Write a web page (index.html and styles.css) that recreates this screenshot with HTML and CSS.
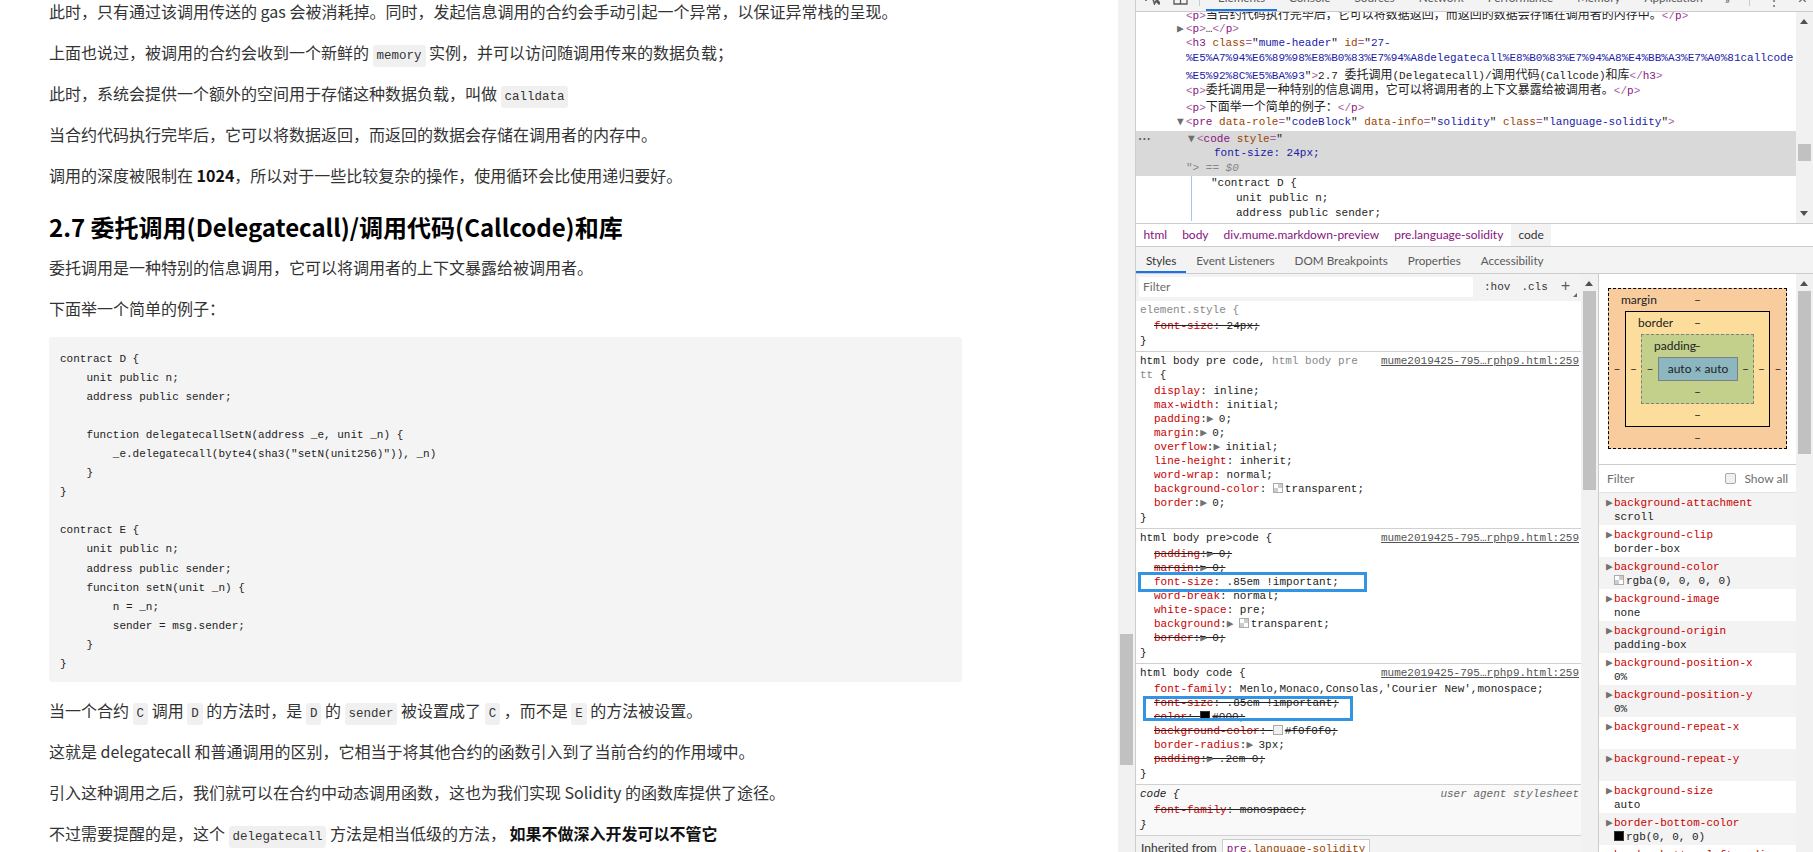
FILE: index.html
```html
<!DOCTYPE html>
<html lang="zh-CN">
<head>
    <meta charset="UTF-8">
    <title>2.7 委托调用(Delegatecall)/调用代码(Callcode)和库</title>
    <link rel="stylesheet" href="styles.css">
</head>
<body>
    <div class="preview">
        <div class="article">
            <p>此时，只有通过该调用传送的 gas 会被消耗掉。同时，发起信息调用的合约会手动引起一个异常，以保证异常栈的呈现。</p>
            <p>上面也说过，被调用的合约会收到一个新鲜的 <code>memory</code> 实例，并可以访问随调用传来的数据负载；</p>
            <p>此时，系统会提供一个额外的空间用于存储这种数据负载，叫做 <code>calldata</code></p>
            <p>当合约代码执行完毕后，它可以将数据返回，而返回的数据会存储在调用者的内存中。</p>
            <p>调用的深度被限制在 <strong>1024</strong>，所以对于一些比较复杂的操作，使用循环会比使用递归要好。</p>
            <h3>2.7 委托调用(Delegatecall)/调用代码(Callcode)和库</h3>
            <p>委托调用是一种特别的信息调用，它可以将调用者的上下文暴露给被调用者。</p>
            <p>下面举一个简单的例子：</p>
            <pre>contract D {
    unit public n;
    address public sender;

    function delegatecallSetN(address _e, unit _n) {
        _e.delegatecall(byte4(sha3("setN(unit256)")), _n)
    }
}

contract E {
    unit public n;
    address public sender;
    funciton setN(unit _n) {
        n = _n;
        sender = msg.sender;
    }
}</pre>
            <p>当一个合约 <code>C</code> 调用 <code>D</code> 的方法时，是 <code>D</code> 的 <code>sender</code> 被设置成了 <code>C</code> ，而不是 <code>E</code> 的方法被设置。</p>
            <p>这就是 delegatecall 和普通调用的区别，它相当于将其他合约的函数引入到了当前合约的作用域中。</p>
            <p>引入这种调用之后，我们就可以在合约中动态调用函数，这也为我们实现 Solidity 的函数库提供了途径。</p>
            <p>不过需要提醒的是，这个 <code>delegatecall</code> 方法是相当低级的方法， <strong>如果不做深入开发可以不管它</strong></p>
        </div>
    </div>
    <div class="vbar page-bar"><div class="thumb"></div></div>

    <div class="devtools">
        <div class="toolbar">
            <svg class="tool-icon" width="15" height="15" viewBox="0 0 15 15"><path d="M1 11V1h10v3M7 6l2.500 8 1.500-3 3 3 1-1-3-3 3-1.500z" fill="none" stroke="#5a5a5a" stroke-width="1.500"/></svg>
            <svg class="tool-icon" width="15" height="15" viewBox="0 0 15 15"><path d="M1 1h13v13H1zM7.500 5v9" fill="none" stroke="#5a5a5a" stroke-width="1.300"/></svg>
            <span class="tool-sep first"></span>
            <span class="tool-tab active">Elements</span>
            <span class="tool-tab">Console</span>
            <span class="tool-tab">Sources</span>
            <span class="tool-tab">Network</span>
            <span class="tool-tab">Performance</span>
            <span class="tool-tab">Memory</span>
            <span class="tool-tab">Application</span>
            <span class="tool-more">»</span>
            <span class="tool-sep"></span>
            <span class="tool-dots">⋮</span>
            <span class="tool-close">×</span>
        </div>

        <div class="dom-panel">
            <div class="dom-list">
                <div class="row in1"><b>&lt;</b><i>p</i><b>&gt;</b><span class="zh">当合约代码执行完毕后，它可以将数据返回，而返回的数据会存储在调用者的内存中。</span><b>&lt;/</b><i>p</i><b>&gt;</b></div>
                <div class="row in1"><span class="arrow">▶</span><b>&lt;</b><i>p</i><b>&gt;</b>…<b>&lt;/</b><i>p</i><b>&gt;</b></div>
                <div class="row in1"><b>&lt;</b><i>h3</i> <u>class</u><b>=</b>"<em>mume-header</em>" <u>id</u><b>=</b>"<em>27-</em></div>
                <div class="row in1"><em>%E5%A7%94%E6%89%98%E8%B0%83%E7%94%A8delegatecall%E8%B0%83%E7%94%A8%E4%BB%A3%E7%A0%81callcode</em></div>
                <div class="row in1"><em>%E5%92%8C%E5%BA%93</em>"<b>&gt;</b>2.7 <span class="zh">委托调用</span>(Delegatecall)/<span class="zh">调用代码</span>(Callcode)<span class="zh">和库</span><b>&lt;/</b><i>h3</i><b>&gt;</b></div>
                <div class="row tall in1"><b>&lt;</b><i>p</i><b>&gt;</b><span class="zh">委托调用是一种特别的信息调用，它可以将调用者的上下文暴露给被调用者。</span><b>&lt;/</b><i>p</i><b>&gt;</b></div>
                <div class="row tall in1"><b>&lt;</b><i>p</i><b>&gt;</b><span class="zh">下面举一个简单的例子：</span><b>&lt;/</b><i>p</i><b>&gt;</b></div>
                <div class="row tall in1"><span class="arrow">▼</span><b>&lt;</b><i>pre</i> <u>data-role</u><b>=</b>"<em>codeBlock</em>" <u>data-info</u><b>=</b>"<em>solidity</em>" <u>class</u><b>=</b>"<em>language-solidity</em>"<b>&gt;</b></div>
                <div class="selected">
                    <span class="sel-dots">•••</span>
                    <div class="row in2"><span class="arrow">▼</span><b>&lt;</b><i>code</i> <u>style</u><b>=</b>"</div>
                    <div class="row in3"><em>font-size: 24px;</em></div>
                    <div class="row in1"><span class="dim">"&gt; == <span class="var">$0</span></span></div>
                </div>
                <div class="code-text">
                    <div class="row in4">"contract D {</div>
                    <div class="row in5">unit public n;</div>
                    <div class="row in5">address public sender;</div>
                </div>
            </div>
            <div class="vbar dom-bar">
                <span class="bar-up"></span>
                <div class="thumb"></div>
                <span class="bar-down"></span>
            </div>
        </div>

        <div class="crumbs">
            <span>html</span><span>body</span><span>div.mume.markdown-preview</span><span>pre.language-solidity</span><span class="crumb-on">code</span>
        </div>

        <div class="side-tabs">
            <span class="side-tab active">Styles</span>
            <span class="side-tab">Event Listeners</span>
            <span class="side-tab">DOM Breakpoints</span>
            <span class="side-tab">Properties</span>
            <span class="side-tab">Accessibility</span>
        </div>

        <div class="side-body">
            <div class="styles">
                <div class="filter-bar">
                    <span class="filter-input">Filter</span>
                    <span class="filter-btn">:hov</span>
                    <span class="filter-btn">.cls</span>
                    <span class="filter-plus">+</span>
                    <span class="filter-corner"></span>
                </div>

                <div class="rule">
                    <div class="sel dim">element.style {</div>
                    <div class="props">
                        <div class="off"><span class="n">font-size</span>: 24px;</div>
                    </div>
                    <div>}</div>
                </div>

                <div class="rule">
                    <span class="src">mume2019425-795…rphp9.html:259</span>
                    <div class="sel">html body pre code, <span class="dim">html body pre<br>tt</span> {</div>
                    <div class="props">
                        <div><span class="n">display</span>: inline;</div>
                        <div><span class="n">max-width</span>: initial;</div>
                        <div><span class="n">padding</span>:<span class="tri">▶</span>&nbsp;0;</div>
                        <div><span class="n">margin</span>:<span class="tri">▶</span>&nbsp;0;</div>
                        <div><span class="n">overflow</span>:<span class="tri">▶</span>&nbsp;initial;</div>
                        <div><span class="n">line-height</span>: inherit;</div>
                        <div><span class="n">word-wrap</span>: normal;</div>
                        <div><span class="n">background-color</span>: <span class="swatch"></span>transparent;</div>
                        <div><span class="n">border</span>:<span class="tri">▶</span>&nbsp;0;</div>
                    </div>
                    <div>}</div>
                </div>

                <div class="rule">
                    <span class="src">mume2019425-795…rphp9.html:259</span>
                    <div class="sel">html body pre&gt;code {</div>
                    <div class="props">
                        <div class="off"><span class="n">padding</span>:<span class="tri">▶</span>&nbsp;0;</div>
                        <div class="off"><span class="n">margin</span>:<span class="tri">▶</span>&nbsp;0;</div>
                        <div><span class="n">font-size</span>: .85em !important;</div>
                        <div><span class="n">word-break</span>: normal;</div>
                        <div><span class="n">white-space</span>: pre;</div>
                        <div><span class="n">background</span>:<span class="tri">▶</span>&nbsp;<span class="swatch"></span>transparent;</div>
                        <div class="off"><span class="n">border</span>:<span class="tri">▶</span>&nbsp;0;</div>
                    </div>
                    <div>}</div>
                    <div class="mark mark-size"></div>
                </div>

                <div class="rule">
                    <span class="src">mume2019425-795…rphp9.html:259</span>
                    <div class="sel">html body code {</div>
                    <div class="props">
                        <div><span class="n">font-family</span>: Menlo,Monaco,Consolas,'Courier New',monospace;</div>
                        <div class="off"><span class="n">font-size</span>: .85em !important;</div>
                        <div class="off"><span class="n">color</span>: <span class="swatch black"></span>#000;</div>
                        <div class="off"><span class="n">background-color</span>: <span class="swatch light"></span>#f0f0f0;</div>
                        <div><span class="n">border-radius</span>:<span class="tri">▶</span>&nbsp;3px;</div>
                        <div class="off"><span class="n">padding</span>:<span class="tri">▶</span>&nbsp;.2em 0;</div>
                    </div>
                    <div>}</div>
                    <div class="mark mark-font"></div>
                </div>

                <div class="rule agent">
                    <span class="src plain">user agent stylesheet</span>
                    <div class="sel">code {</div>
                    <div class="props">
                        <div class="off"><span class="n">font-family</span>: monospace;</div>
                    </div>
                    <div>}</div>
                </div>

                <div class="inherited">Inherited from <span class="inherit-chip"><i>pre</i><u>.language-solidity</u></span></div>
            </div>
            <div class="vbar styles-bar">
                <span class="bar-up"></span>
                <div class="thumb"></div>
            </div>

            <div class="computed">
                <div class="boxmodel">
                    <div class="bm bm-margin">
                        <span class="bm-label">margin</span>
                        <span class="bm-wide">–</span>
                        <span>–</span>
                        <div class="bm bm-border">
                            <span class="bm-label">border</span>
                            <span class="bm-wide">–</span>
                            <span>–</span>
                            <div class="bm bm-padding">
                                <span class="bm-label">padding</span>
                                <span class="bm-wide">–</span>
                                <span>–</span>
                                <div class="bm-content">auto × auto</div>
                                <span>–</span>
                                <span class="bm-wide">–</span>
                            </div>
                            <span>–</span>
                            <span class="bm-wide">–</span>
                        </div>
                        <span>–</span>
                        <span class="bm-wide">–</span>
                    </div>
                </div>
                <div class="computed-filter">
                    <span>Filter</span>
                    <span class="check"></span>
                    <span class="show-all">Show all</span>
                </div>
                <div class="cp"><span class="tri">▶</span><span class="n">background-attachment</span><div>scroll</div></div>
                <div class="cp"><span class="tri">▶</span><span class="n">background-clip</span><div>border-box</div></div>
                <div class="cp"><span class="tri">▶</span><span class="n">background-color</span><div><span class="swatch"></span>rgba(0, 0, 0, 0)</div></div>
                <div class="cp"><span class="tri">▶</span><span class="n">background-image</span><div>none</div></div>
                <div class="cp"><span class="tri">▶</span><span class="n">background-origin</span><div>padding-box</div></div>
                <div class="cp"><span class="tri">▶</span><span class="n">background-position-x</span><div>0%</div></div>
                <div class="cp"><span class="tri">▶</span><span class="n">background-position-y</span><div>0%</div></div>
                <div class="cp"><span class="tri">▶</span><span class="n">background-repeat-x</span><div></div></div>
                <div class="cp"><span class="tri">▶</span><span class="n">background-repeat-y</span><div></div></div>
                <div class="cp"><span class="tri">▶</span><span class="n">background-size</span><div>auto</div></div>
                <div class="cp"><span class="tri">▶</span><span class="n">border-bottom-color</span><div><span class="swatch black"></span>rgb(0, 0, 0)</div></div>
                <div class="cp"><span class="tri">▶</span><span class="n">border-bottom-left-radius</span><div>0px</div></div>
            </div>
            <div class="vbar computed-bar">
                <span class="bar-up"></span>
                <div class="thumb"></div>
            </div>
        </div>
    </div>
</body>
</html>
```

FILE: styles.css
```css
html, body {
    height: 100%;
}

body {
    margin: 0;
    display: flex;
    height: 852px;
    overflow: hidden;
    background: #fff;
    color: #333;
    font-family: "Lato", "Noto Sans CJK SC", sans-serif;
}

/* left: markdown preview */
.preview {
    width: 1118px;
    height: 852px;
    overflow: hidden;
    flex: none;
}

.article {
    margin: -1px 156px 0 49px;
    font-family: "Noto Sans CJK SC", sans-serif;
    font-size: 16px;
    line-height: 25px;
}

.article p {
    margin: 0 0 16px;
    white-space: nowrap;
}

.article strong {
    font-weight: 700;
    color: #111;
}

.article code {
    font-family: "Liberation Mono", monospace;
    font-size: 12.47px;
    line-height: 1;
    background: #f0f0f0;
    border-radius: 3px;
    padding: 4px;
}

.article h3 {
    margin: 21px 0 10px;
    font-size: 24px;
    line-height: 36px;
    font-weight: 700;
    color: #000;
}

.article pre {
    margin: 0 0 16px;
    padding: 13px 11px 9px;
    height: 323px;
    background: #f4f4f4;
    border-radius: 3px;
    font-family: "Liberation Mono", monospace;
    font-size: 11px;
    line-height: 19.04px;
    color: #222;
}

/* scrollbars */
.vbar {
    flex: none;
    width: 17px;
    box-sizing: border-box;
    padding: 0 2px;
    background: #f1f1f1;
    overflow: hidden;
}

.thumb {
    background: #c1c1c1;
}

.page-bar {
    height: 852px;
    padding-top: 634px;
}

.page-bar .thumb {
    height: 131px;
}

.bar-up, .bar-down {
    display: block;
    width: 0;
    height: 0;
    margin-left: 2px;
    border-left: 4.500px solid transparent;
    border-right: 4.500px solid transparent;
}

.bar-up {
    border-bottom: 5px solid #505050;
}

.bar-down {
    border-top: 5px solid #505050;
}

.dom-bar {
    height: 211px;
}

.dom-bar .bar-up {
    margin-top: 7px;
}

.dom-bar .thumb {
    height: 17px;
    margin-top: 120px;
}

.dom-bar .bar-down {
    margin-top: 50px;
}

.styles-bar {
    height: 578px;
}

.styles-bar .bar-up, .computed-bar .bar-up {
    margin-top: 7px;
}

.styles-bar .thumb {
    height: 199px;
    margin-top: 5px;
}

.computed-bar {
    height: 578px;
}

.computed-bar .thumb {
    height: 163px;
    margin-top: 5px;
}

/* devtools */
.devtools {
    flex: 1;
    min-width: 0;
    border-left: 1px solid #ccc;
    font-size: 12px;
    color: #333;
}

.toolbar {
    display: flex;
    align-items: flex-end;
    height: 12px;
    box-sizing: border-box;
    padding-left: 9px;
    overflow: hidden;
    background: #f3f3f3;
    border-bottom: 1px solid #ccc;
    color: #5a5a5a;
    font-size: 11.7px;
}

.tool-icon {
    flex: none;
    margin: 0 13px 6px 0;
}

.tool-sep {
    flex: none;
    width: 1px;
    height: 16px;
    margin: 0 6px 5px 0;
    background: #ccc;
}

.tool-sep.first {
    margin: 0 6px 5px -2px;
}

.tool-tab {
    flex: none;
    height: 27px;
    line-height: 27px;
    padding: 0 12px;
}

.tool-tab.active {
    box-shadow: inset 0 -2px #1a73e8;
    width: 47px;
    text-align: center;
}

.tool-more {
    margin: 0 19px 7px 10px;
    line-height: 10px;
}

.tool-dots {
    margin: 0 18px 6px 12px;
    line-height: 10px;
}

.tool-close {
    font-size: 16px;
    line-height: 12px;
    margin-bottom: 7px;
}

.dom-panel {
    display: flex;
    height: 211px;
    border-bottom: 1px solid #ccc;
    font-family: "Liberation Mono", "Noto Sans CJK SC", monospace;
    font-size: 11px;
}

.dom-list {
    flex: 1;
    min-width: 0;
    overflow: hidden;
    color: #222;
}

.row {
    height: 15px;
    line-height: 15px;
    white-space: nowrap;
}

.dom-list > .row:first-child {
    margin-top: -6px;
}

.row.tall {
    height: 16.67px;
    line-height: 16.67px;
}

.in1 { padding-left: 50px; }
.in2 { padding-left: 61px; }
.in3 { padding-left: 78px; }
.in4 { padding-left: 75px; }
.in5 { padding-left: 100px; }

.row b {
    font-weight: 400;
    color: #a560a0;
}

.row i {
    font-style: normal;
    color: #881280;
}

.row u {
    text-decoration: none;
    color: #994500;
}

.row em {
    font-style: normal;
    color: #1a1aa6;
}

.zh {
    font-family: "Noto Sans CJK SC", sans-serif;
    font-size: 12px;
}

.arrow {
    display: inline-block;
    width: 9px;
    margin-left: -9px;
    font-family: "DejaVu Sans Mono", monospace;
    font-size: 11px;
    color: #6e6e6e;
}

.selected {
    position: relative;
    background: #d9d9d9;
}

.sel-dots {
    position: absolute;
    left: 2px;
    top: 1px;
    font-size: 7px;
    line-height: 15px;
    color: #555;
}

.dim {
    color: #888;
}

.var {
    font-style: italic;
}

.code-text {
    margin-left: 55px;
    border-left: 1px solid #a8c7f0;
}

.code-text .row {
    margin-left: -56px;
}

/* breadcrumbs */
.crumbs {
    display: flex;
    height: 22px;
    line-height: 22px;
    border-bottom: 1px solid #ccc;
    color: #881280;
}

.crumbs span {
    padding: 0 7.500px;
}

.crumbs .crumb-on {
    background: #f3f3f3;
    color: #333;
}

.side-tabs {
    display: flex;
    height: 26px;
    line-height: 27px;
    background: #f3f3f3;
    border-bottom: 1px solid #ccc;
    color: #5a5a5a;
    font-size: 11.7px;
}

.side-tab {
    padding: 0 10px;
}

.side-tab.active {
    color: #333;
    box-shadow: inset 0 -2px #1a73e8;
}

.side-body {
    display: flex;
    height: 578px;
    overflow: hidden;
}

.styles {
    flex: none;
    width: 445px;
    font-family: "Liberation Mono", monospace;
    font-size: 11px;
    line-height: 14px;
    color: #222;
}

.filter-bar {
    position: relative;
    display: flex;
    align-items: center;
    height: 27px;
    box-sizing: border-box;
    padding: 0 0 1px 3px;
    background: #f3f3f3;
}

.filter-input {
    flex: none;
    width: 330px;
    height: 20px;
    line-height: 20px;
    padding-left: 4px;
    background: #fff;
    font-family: "Lato", sans-serif;
    font-size: 12px;
    color: #6e6e6e;
}

.filter-btn {
    margin-left: 11px;
    color: #333;
}

.filter-plus {
    margin-left: 13px;
    font-size: 16px;
    color: #5a5a5a;
}

.filter-corner {
    position: absolute;
    right: 4px;
    bottom: 4px;
    width: 0;
    height: 0;
    border-left: 4px solid transparent;
    border-bottom: 4px solid #666;
}

.rule {
    position: relative;
    padding: 2px 2px 3px 4px;
    border-bottom: 1px solid #d0d0d0;
}

.rule.agent {
    background: #f9f9f9;
}

.src {
    float: right;
    color: #545454;
    text-decoration: underline;
}

.src.plain {
    text-decoration: none;
    font-style: italic;
    color: #666;
}

.agent .sel, .agent > div:last-child {
    font-style: italic;
}

.props {
    margin: 2px 0 1px;
    padding-left: 14px;
    white-space: nowrap;
}

.n {
    color: #c80000;
}

.off {
    text-decoration: line-through;
}

.tri {
    font-family: "DejaVu Sans Mono", monospace;
    font-size: 11px;
    letter-spacing: -1.200px;
    color: #727272;
}

.swatch {
    display: inline-block;
    width: 8px;
    height: 8px;
    margin-right: 2px;
    vertical-align: -1px;
    border: 1px solid #aaa;
    background: conic-gradient(#ccc 25%, #fff 0 50%, #ccc 0 75%, #fff 0);
}

.swatch.black {
    background: #000;
    border-color: #333;
}

.swatch.light {
    background: #f0f0f0;
}

/* the blue boxes drawn on top of the screenshot */
.mark {
    position: absolute;
    box-sizing: border-box;
    border: 3px solid #3394e4;
}

.mark-size {
    left: 2px;
    top: 43px;
    width: 229px;
    height: 20px;
}

.mark-font {
    left: 7px;
    top: 32px;
    width: 210px;
    height: 25px;
}

.inherited {
    height: 20px;
    padding: 3px 0 0 5px;
    background: #f3f3f3;
    font-family: "Lato", sans-serif;
    font-size: 12px;
    color: #333;
}

.inherit-chip {
    display: inline-block;
    height: 20px;
    line-height: 18px;
    margin-left: 2px;
    padding: 0 4px;
    box-sizing: border-box;
    border: 1px solid #ccc;
    border-bottom: 0;
    background: #fff;
    font-family: "Liberation Mono", monospace;
    font-size: 11px;
}

.inherit-chip i {
    font-style: normal;
    color: #881280;
}

.inherit-chip u {
    text-decoration: none;
    color: #994500;
}

/* computed pane */
.computed {
    flex: none;
    width: 197px;
    border-left: 1px solid #ccc;
    overflow: hidden;
    font-family: "Liberation Mono", monospace;
    font-size: 11px;
    line-height: 14px;
    color: #222;
}

.boxmodel {
    height: 176px;
    padding: 14px 0 0 9px;
    border-bottom: 1px solid #ccc;
    font-family: "Lato", sans-serif;
    font-size: 12px;
}

.bm {
    position: relative;
    display: grid;
    justify-items: center;
    align-items: center;
    text-align: center;
}

.bm-wide {
    grid-column: 1 / 4;
}

.bm-label {
    position: absolute;
    left: 12px;
    top: 4px;
    line-height: 14px;
}

.bm-margin {
    width: 179px;
    height: 161px;
    box-sizing: border-box;
    grid-template-columns: 16px 145px 16px;
    grid-template-rows: 22px 116px 21px;
    background: #f9cc9d;
    border: 1px dashed #000;
}

.bm-border {
    width: 145px;
    height: 116px;
    box-sizing: border-box;
    grid-template-columns: 15px 113px 15px;
    grid-template-rows: 22px 70px 22px;
    background: #fddd9b;
    border: 1px solid #000;
}

.bm-padding {
    width: 113px;
    height: 70px;
    box-sizing: border-box;
    grid-template-columns: 16px 80px 15px;
    grid-template-rows: 22px 24px 22px;
    background: #c3d08b;
    border: 1px dashed #808080;
}

.bm-content {
    width: 80px;
    height: 24px;
    line-height: 22px;
    box-sizing: border-box;
    background: #8cb6c0;
    border: 1px solid #808080;
}

.computed-filter {
    display: flex;
    align-items: center;
    height: 27px;
    padding-left: 8px;
    border-bottom: 1px solid #e4e4e4;
    font-family: "Lato", sans-serif;
    font-size: 12px;
    color: #6e6e6e;
}

.check {
    width: 9px;
    height: 9px;
    margin-left: 91px;
    border: 1px solid #aaa;
    border-radius: 2px;
    background: #f0f0f0;
}

.show-all {
    margin-left: 8px;
}

.cp {
    height: 29px;
    padding: 3px 0 0 15px;
    white-space: nowrap;
}

.cp:nth-of-type(odd) {
    background: #f3f3f3;
}

.cp > .tri {
    display: inline-block;
    width: 8px;
    margin-left: -8px;
}
```
